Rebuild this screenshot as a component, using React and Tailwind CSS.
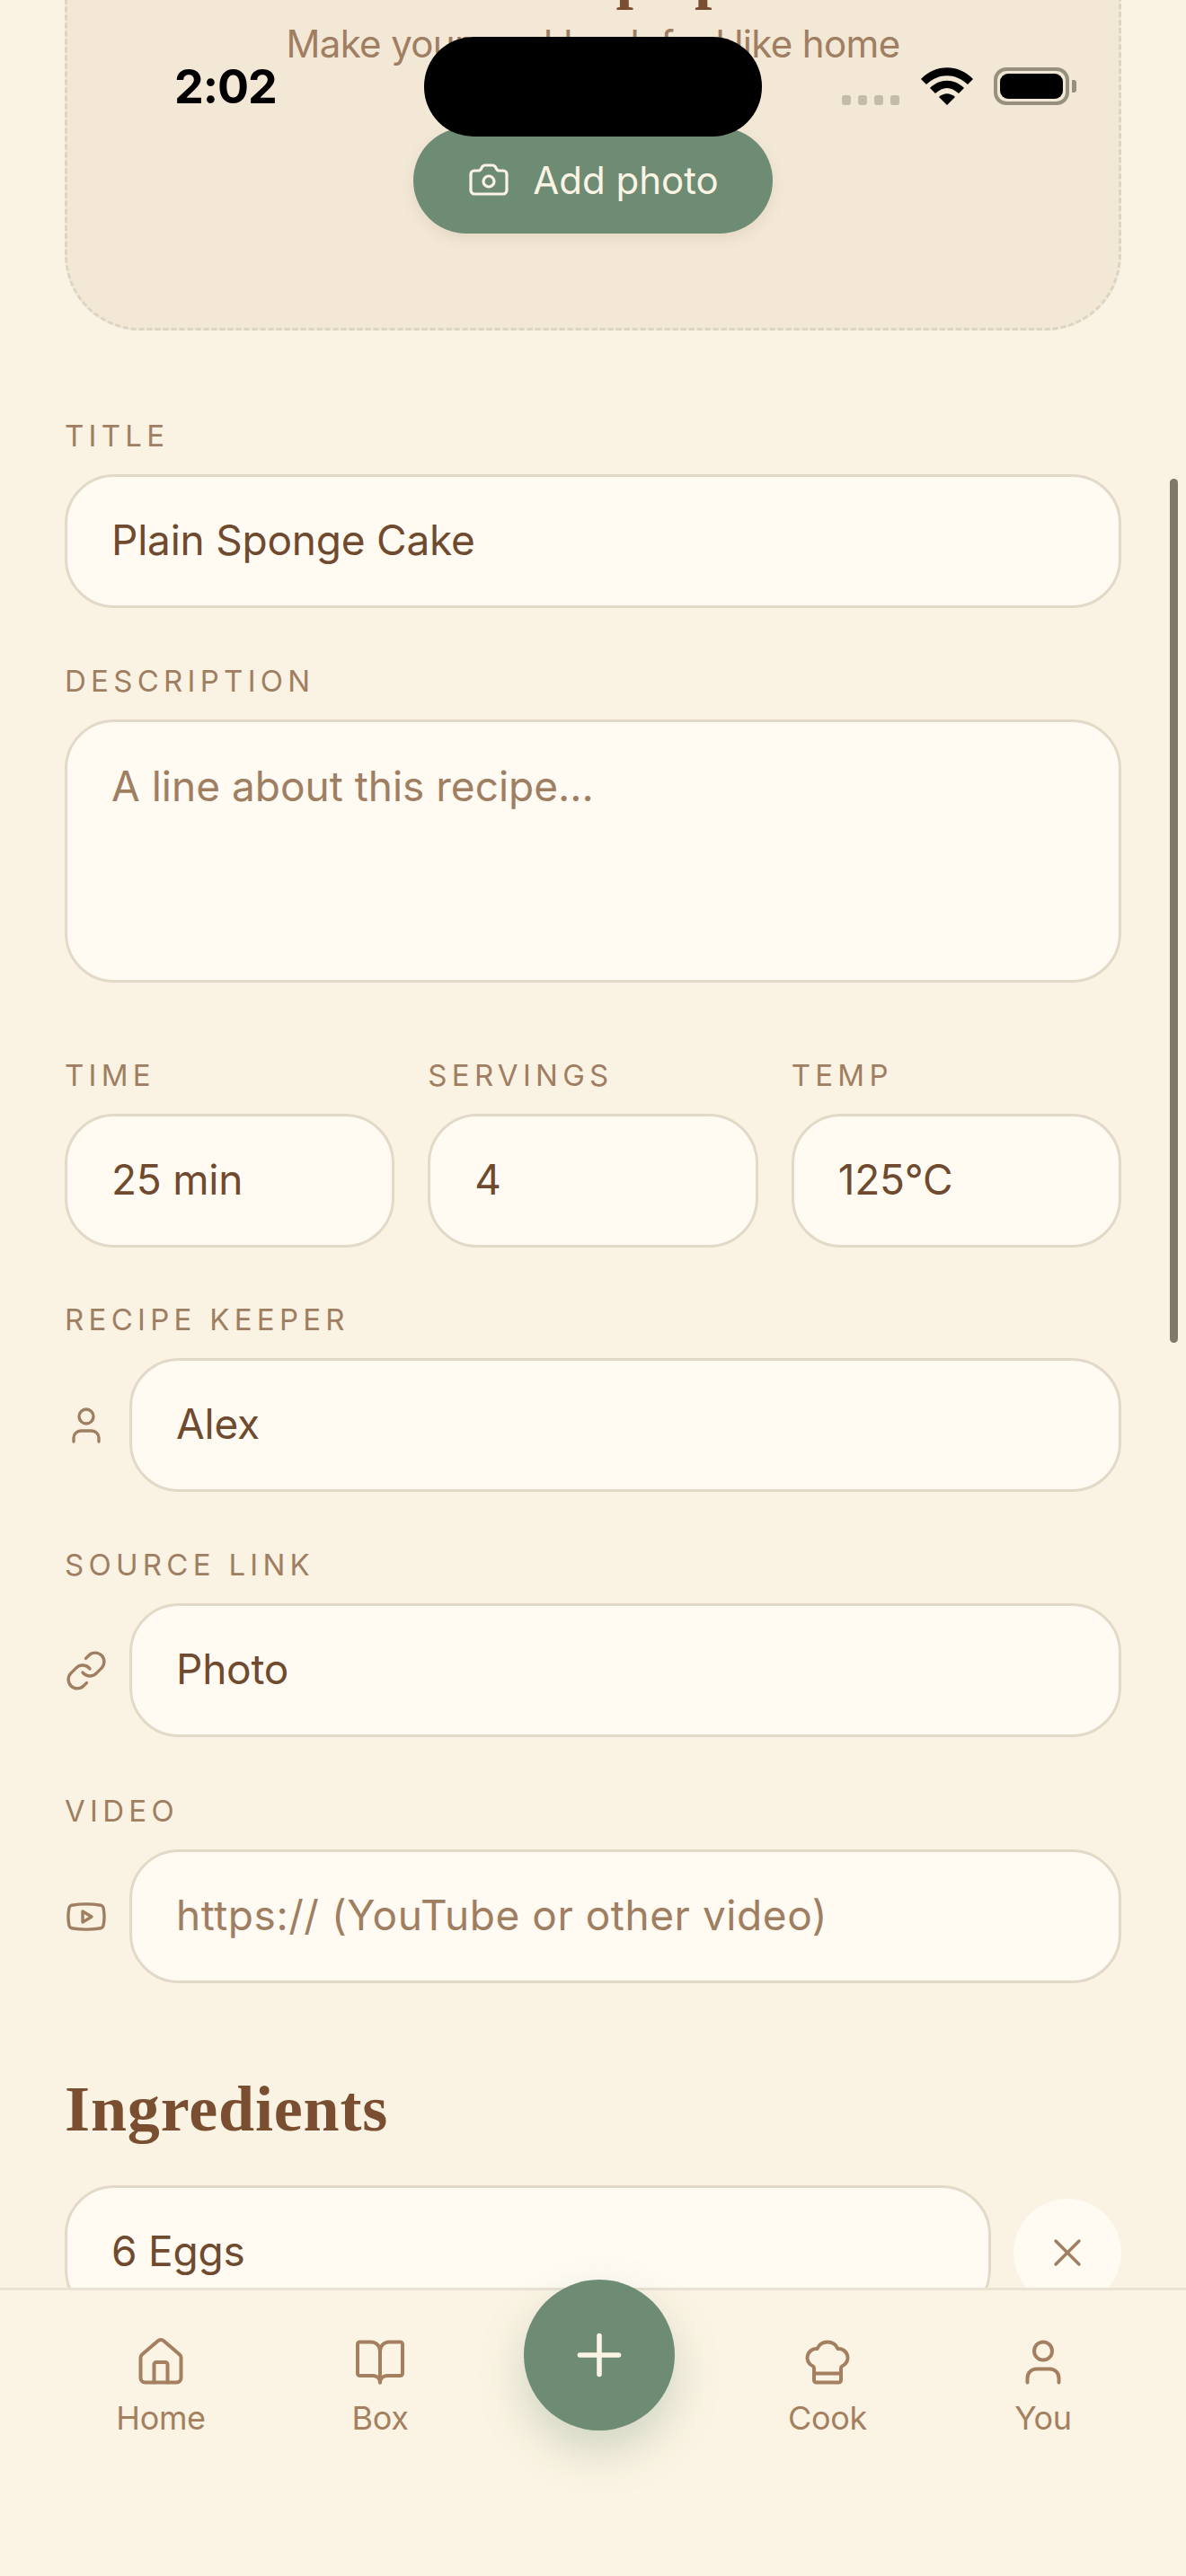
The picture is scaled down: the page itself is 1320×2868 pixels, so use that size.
import React from 'react';
import { Camera, House, BookOpen, ChefHat, User, Link, Youtube, X, Plus } from 'lucide-react';

const sans = 'font-["Inter","Noto_Sans",sans-serif]';

function Label({ children }) {
    return <div className="h-[44px] mb-[21px] text-[33px] leading-[44px] tracking-[0.16em] uppercase text-[#a07e62] font-normal">{children}</div>;
}

function Box({ children, muted, className = 'h-[149px]' }) {
    return (
        <div className={`${className} rounded-[55px] border-[3px] border-[#e2d9c8] bg-[#fffbf3] px-[49px] pb-[2px] flex items-center text-[46px] ${muted ? 'text-[#a07e62] tracking-[0.012em]' : 'text-[#6f4a2e] tracking-[-0.005em]'}`}>
            {children}
        </div>
    );
}

function IconField({ icon, children, muted }) {
    return (
        <div className="flex items-center gap-[24px]">
            <div className="w-[48px] flex justify-center text-[#a07e62] shrink-0">{icon}</div>
            <div className="flex-1">
                <Box muted={muted}>{children}</Box>
            </div>
        </div>
    );
}

function NavItem({ icon, label }) {
    return (
        <div className="flex flex-col items-center text-[#a47f60]">
            {icon}
            <span className="mt-[8px] text-[36px] leading-[48px] tracking-[-0.01em]">{label}</span>
        </div>
    );
}

function StatusBar() {
    return (
        <div className="absolute top-0 left-0 w-full">
            <div className="absolute left-[194px] top-[64px] text-[52px] leading-[66px] font-bold tracking-[-0.02em] text-black">2:02</div>
            <div className="absolute left-[472px] top-[41px] w-[376px] h-[111px] rounded-[55px] bg-black" />
            <div className="absolute left-[937px] top-[106px] flex gap-[8px]">
                <span className="w-[10px] h-[11px] rounded-[3px] bg-[#c4bba8]" />
                <span className="w-[10px] h-[11px] rounded-[3px] bg-[#c4bba8]" />
                <span className="w-[10px] h-[11px] rounded-[3px] bg-[#c4bba8]" />
                <span className="w-[10px] h-[11px] rounded-[3px] bg-[#c4bba8]" />
            </div>
            <svg className="absolute left-[1025px] top-[75px]" width="58" height="42" viewBox="0 0 58 42" fill="#000">
                <path d="M0 13 C16 -4 42 -4 58 13 L52 19 C38 6 20 6 6 19 Z" />
                <path d="M10 23 C21 12 37 12 48 23 L42 29 C33 21 25 21 16 29 Z" />
                <path d="M20 33 C26 28 32 28 38 33 L29 42 Z" />
            </svg>
            <div className="absolute left-[1106px] top-[75px] w-[84px] h-[42px] rounded-[14px] border-[4px] border-[#97907f] p-[3px]">
                <div className="w-full h-full rounded-[9px] bg-black" />
            </div>
            <div className="absolute left-[1193px] top-[89px] w-[5px] h-[14px] rounded-r-[3px] bg-[#97907f]" />
        </div>
    );
}

export default function App() {
    return (
        <div className={`relative w-[1320px] h-[2868px] overflow-hidden flex flex-col bg-[#faf3e3] ${sans}`}>
            <main className="flex-1 overflow-hidden px-[72px]">
                <div className="-mt-[130px] pt-[60px] h-[498px] pb-[108px] rounded-[84px] border-[3px] border-dashed border-[#dcd5c4] bg-[#f3e8d6] flex flex-col items-center">
                    <div className='h-[80px] text-[70px] leading-[80px] font-bold text-[#7a4e30] font-["Liberation_Serif",serif]'>Add a recipe photo</div>
                    <div className="mt-[12px] h-[48px] text-[42px] leading-[48px] tracking-[-0.015em] text-[#a07e62]">Make your cookbook feel like home</div>
                    <div className="mt-[69px] w-[400px] h-[118px] shrink-0 pb-[2px] rounded-full bg-[#6e8b74] text-[#fbf4e4] flex items-center justify-center gap-[25px] text-[42px] shadow-[0_6px_16px_rgba(110,80,50,0.1)]">
                        <Camera size={48} strokeWidth={1.6} />
                        <span>Add photo</span>
                    </div>
                </div>

                <div className="mt-[95px]">
                    <Label>Title</Label>
                    <Box>Plain Sponge Cake</Box>
                </div>

                <div className="mt-[59px]">
                    <Label>Description</Label>
                    <Box muted className="h-[293px] !items-start pt-[37px] !tracking-[0]">A line about this recipe…</Box>
                </div>

                <div className="mt-[81px] grid grid-cols-3 gap-[37px]">
                    <div>
                        <Label>Time</Label>
                        <Box>25 min</Box>
                    </div>
                    <div>
                        <Label>Servings</Label>
                        <Box>4</Box>
                    </div>
                    <div>
                        <Label>Temp</Label>
                        <Box>125°C</Box>
                    </div>
                </div>

                <div className="mt-[58px]">
                    <Label>Recipe keeper</Label>
                    <IconField icon={<User size={48} strokeWidth={1.7} />}>Alex</IconField>
                </div>

                <div className="mt-[59px]">
                    <Label>Source link</Label>
                    <IconField icon={<Link size={48} strokeWidth={1.7} />}>Photo</IconField>
                </div>

                <div className="mt-[60px]">
                    <Label>Video</Label>
                    <IconField muted icon={<Youtube size={48} strokeWidth={1.7} />}>https:// (YouTube or other video)</IconField>
                </div>

                <h2 className='mt-[100px] h-[80px] text-[72px] leading-[80px] font-bold tracking-[0.012em] text-[#7a4e30] font-["Liberation_Serif",serif]'>Ingredients</h2>

                <div className="mt-[45px] flex items-center gap-[25px]">
                    <div className="flex-1">
                        <Box>6 Eggs</Box>
                    </div>
                    <div className="w-[120px] h-[120px] rounded-full bg-[#fffbf3] flex items-center justify-center text-[#a07e62]">
                        <X size={52} strokeWidth={1.6} />
                    </div>
                </div>
            </main>

            <nav className="relative h-[321px] shrink-0 border-t-[3px] border-[#eae2d2] bg-[#fbf4e4] pt-[50px] px-[60px] grid grid-cols-[238px_250px_234px_278px_202px] items-start">
                <NavItem icon={<House size={60} strokeWidth={1.6} />} label="Home" />
                <NavItem icon={<BookOpen size={60} strokeWidth={1.6} />} label="Box" />
                <div />
                <NavItem icon={<ChefHat size={60} strokeWidth={1.6} />} label="Cook" />
                <NavItem icon={<User size={60} strokeWidth={1.6} />} label="You" />
                <div className="absolute left-[583px] -top-[12px] w-[168px] h-[168px] rounded-full bg-[#6e8b74] text-[#fbf4e4] flex items-center justify-center shadow-[0_22px_50px_rgba(110,139,116,0.3)]">
                    <Plus size={74} strokeWidth={1.8} />
                </div>
            </nav>

            <div className="absolute left-[1302px] top-[533px] w-[9px] h-[962px] rounded-full bg-[#80796b]" />
            <StatusBar />
        </div>
    );
}
